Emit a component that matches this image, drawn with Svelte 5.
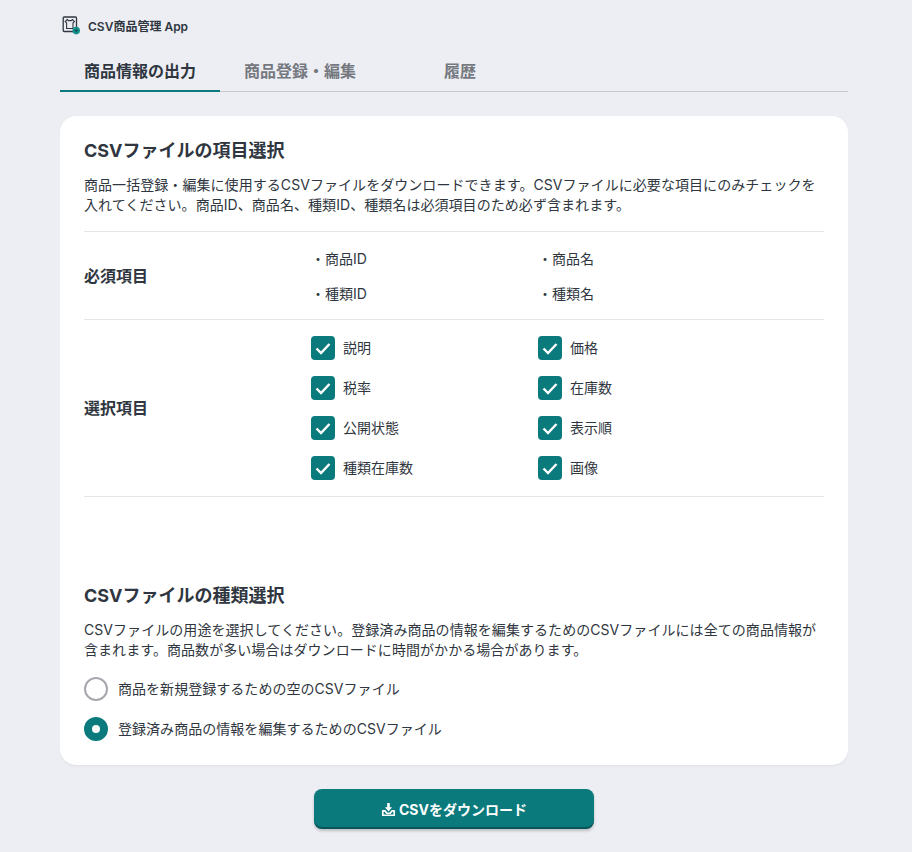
<script>
  const required = ['商品ID', '商品名', '種類ID', '種類名'];
  const optional = ['説明', '価格', '税率', '在庫数', '公開状態', '表示順', '種類在庫数', '画像'];
</script>

<div class="page">
  <header class="brand">
    <svg class="logo" viewBox="0 0 20 20" width="20" height="20" aria-hidden="true">
      <rect x="1.2" y="2" width="13.3" height="14.5" rx="1" fill="none" stroke="#2f3640" stroke-width="1.3"/>
      <path d="M5.2 4.5l1.2 1.1h2.8l1.2-1.1 2 2-1.4 1.5V13.5H4.6V8L3.2 6.5z" fill="none" stroke="#2f3640" stroke-width="1.1"/>
      <circle cx="14.2" cy="15.6" r="3.8" fill="#17938f"/>
      <path d="M12.3 15.6h3.8M14.2 13.7v3.8" stroke="#0a4f4e" stroke-width="1"/>
    </svg>
    <span>CSV商品管理 App</span>
  </header>

  <nav class="tabs">
    <div class="tab active">商品情報の出力</div>
    <div class="tab">商品登録・編集</div>
    <div class="tab">履歴</div>
  </nav>

  <main class="card">
    <h2>CSVファイルの項目選択</h2>
    <p>商品一括登録・編集に使用するCSVファイルをダウンロードできます。CSVファイルに必要な項目にのみチェックを入れてください。商品ID、商品名、種類ID、種類名は必須項目のため必ず含まれます。</p>

    <section class="row req">
      <div class="label">必須項目</div>
      <div class="grid">
        {#each required as r}
          <div class="req-item">・{r}</div>
        {/each}
      </div>
    </section>

    <section class="row opt">
      <div class="label">選択項目</div>
      <div class="grid">
        {#each optional as o}
          <label class="check">
            <span class="box">
              <svg viewBox="0 0 24 24" width="24" height="24" aria-hidden="true"><path d="M5.5 12.5l4.5 4.5 8.5-9" fill="none" stroke="#fff" stroke-width="2.4"/></svg>
            </span>
            <span class="txt">{o}</span>
          </label>
        {/each}
      </div>
    </section>

    <h2 class="second">CSVファイルの種類選択</h2>
    <p>CSVファイルの用途を選択してください。登録済み商品の情報を編集するためのCSVファイルには全ての商品情報が含まれます。商品数が多い場合はダウンロードに時間がかかる場合があります。</p>

    <div class="radios">
      <label class="radio"><span class="dot"></span><span class="txt">商品を新規登録するための空のCSVファイル</span></label>
      <label class="radio"><span class="dot on"></span><span class="txt">登録済み商品の情報を編集するためのCSVファイル</span></label>
    </div>
  </main>

  <div class="actions">
    <button type="button">
      <svg viewBox="0 0 16 16" width="15" height="15" aria-hidden="true">
        <path d="M6.6 1h2.8v4.6h2.4L8 10 4.2 5.6h2.4z" fill="#fff"/>
        <path d="M1.9 9.4h2.3l2 2.6h3.6l2-2.6h2.3v4.7H1.9z" fill="none" stroke="#fff" stroke-width="1.8" stroke-linejoin="round"/>
      </svg>
      CSVをダウンロード
    </button>
  </div>
</div>

<style>
  :global(body) {
    margin: 0;
    background: #eceef3;
    font-family: Inter, "Noto Sans CJK JP", sans-serif;
    color: #2f3640;
  }
  .page {
    width: 788px;
    margin: 0 0 0 60px;
    height: 852px;
    overflow: hidden;
  }
  .brand {
    display: flex;
    align-items: center;
    gap: 6px;
    height: 20px;
    padding: 15px 0 0 2px;
    font-size: 12px;
    font-weight: 600;
  }
  .tabs {
    display: flex;
    margin-top: 21px;
    height: 35px;
    border-bottom: 1px solid #c6c8cd;
  }
  .tab {
    width: 160px;
    text-align: center;
    font-size: 16px;
    font-weight: 700;
    line-height: 30px;
    color: #75787f;
    box-sizing: border-box;
    height: 36px;
  }
  .active {
    color: #2f3640;
    border-bottom: 2px solid #0b7a7d;
  }
  .card {
    margin-top: 24px;
    background: #fff;
    border-radius: 16px;
    padding: 24px;
    height: 649px;
    box-sizing: border-box;
    box-shadow: 0 1px 3px rgba(0,0,0,.06);
  }
  h2 {
    margin: 0;
    font-size: 18px;
    font-weight: 700;
    line-height: 22px;
  }
  p {
    margin: 13px 0 0;
    font-size: 14px;
    line-height: 20px;
    letter-spacing: .06px;
  }
  .row {
    display: flex;
    align-items: center;
    border-top: 1px solid #e4e5e8;
  }
  .req { margin-top: 16px; height: 87px; }
  .opt { height: 176px; border-bottom: 1px solid #e4e5e8; }
  .label {
    width: 227px;
    font-size: 16px;
    font-weight: 700;
    margin-bottom: 2px;
  }
  .grid {
    display: grid;
    grid-template-columns: 227px 227px;
  }
  .req-item {
    font-size: 14px;
    height: 35px;
    line-height: 35px;
  }
  .check {
    display: flex;
    align-items: center;
    gap: 8px;
    height: 40px;
    font-size: 14px;
  }
  .txt { padding-bottom: 2px; }
  .box {
    width: 24px;
    height: 24px;
    border-radius: 4px;
    background: #0b7a7d;
    display: block;
  }
  .box svg { display: block; }
  .second { margin-top: 88px; }
  .radios { margin-top: 9px; }
  .radio {
    display: flex;
    align-items: center;
    gap: 10px;
    height: 40px;
    font-size: 14px;
    letter-spacing: .04px;
  }
  .dot {
    width: 24px;
    height: 24px;
    box-sizing: border-box;
    border-radius: 50%;
    border: 2px solid #a6a8ad;
    background: #fff;
  }
  .dot.on {
    border: 8px solid #0b7a7d;
  }
  .actions {
    display: flex;
    justify-content: center;
    margin-top: 24px;
  }
  button {
    width: 280px;
    height: 40px;
    border: 0;
    border-radius: 8px;
    background: #0b7a7d;
    color: #fff;
    font: 700 14px Inter, "Noto Sans CJK JP", sans-serif;
    display: flex;
    align-items: center;
    justify-content: center;
    gap: 3px;
    box-shadow: inset 0 -2px 0 rgba(0,0,0,.3), 0 2px 3px rgba(0,0,0,.2);
  }
</style>
